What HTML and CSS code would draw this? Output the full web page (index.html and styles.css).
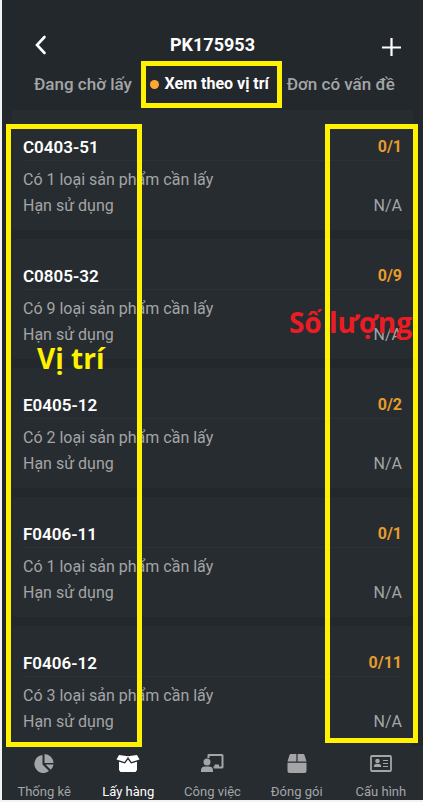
FILE: index.html
```html
<!DOCTYPE html>
<html lang="vi">
<head>
<meta charset="utf-8">
<meta name="viewport" content="width=device-width, initial-scale=1">
<title>PK175953</title>
<link rel="stylesheet" href="styles.css">
</head>
<body>
<div class="app">
  <header class="topbar">
    <button class="icon-button" aria-label="Quay lại"><svg width="24" height="24" viewBox="0 0 24 24"><path d="M16.500 4 9 12l7.500 8" fill="none" stroke="currentColor" stroke-width="2.600" stroke-linecap="round"/></svg></button>
    <h1 class="title">PK175953</h1>
    <button class="icon-button" aria-label="Thêm"><svg width="24" height="24" viewBox="0 0 24 24"><path d="M12.500 5v18M3 14.500h19" fill="none" stroke="currentColor" stroke-width="2.200"/></svg></button>
  </header>
  <nav class="tabs">
    <a class="tab" href="#waiting">Đang chờ lấy</a>
    <a class="tab tab-active" href="#location"><span class="dot"></span>Xem theo vị trí<span class="mark mark-tab"></span></a>
    <a class="tab" href="#issues">Đơn có vấn đề</a>
  </nav>
  <main class="list">
    <article class="card">
      <div class="row head"><h2 class="code">C0403-51</h2><span class="count">0/1</span></div>
      <p class="row">Có 1 loại sản phẩm cần lấy</p>
      <div class="row"><span>Hạn sử dụng</span><span>N/A</span></div>
    </article>
    <article class="card">
      <div class="row head"><h2 class="code">C0805-32</h2><span class="count">0/9</span></div>
      <p class="row">Có 9 loại sản phẩm cần lấy</p>
      <div class="row"><span>Hạn sử dụng</span><span>N/A</span></div>
    </article>
    <article class="card">
      <div class="row head"><h2 class="code">E0405-12</h2><span class="count">0/2</span></div>
      <p class="row">Có 2 loại sản phẩm cần lấy</p>
      <div class="row"><span>Hạn sử dụng</span><span>N/A</span></div>
    </article>
    <article class="card">
      <div class="row head"><h2 class="code">F0406-11</h2><span class="count">0/1</span></div>
      <p class="row">Có 1 loại sản phẩm cần lấy</p>
      <div class="row"><span>Hạn sử dụng</span><span>N/A</span></div>
    </article>
    <article class="card">
      <div class="row head"><h2 class="code">F0406-12</h2><span class="count">0/11</span></div>
      <p class="row">Có 3 loại sản phẩm cần lấy</p>
      <div class="row"><span>Hạn sử dụng</span><span>N/A</span></div>
    </article>
    <div class="mark mark-location"></div>
    <div class="mark mark-quantity"></div>
    <strong class="note note-location">Vị trí</strong>
    <strong class="note note-quantity">Số lượng</strong>
  </main>
  <nav class="bottom">
    <a class="item" href="#stats"><svg width="24" height="24" viewBox="0 0 24 24" fill="currentColor"><path d="M10.500 4A9 9 0 1 0 17 20L10.500 13.500Z"/><path d="M12.500 3A9 9 0 0 1 21.500 12H12.500Z"/><path d="M13.500 13.500H21.500A8.500 8.500 0 0 1 18.800 18.800Z"/></svg>Thống kê</a>
    <a class="item item-active" href="#pick"><svg width="24" height="24" viewBox="0 0 24 24" fill="currentColor"><path d="M3 4 12 5.200 21 4 23.500 8.500 15.500 11 12 6 8.500 11 .5 8.500Z"/><path d="M3 10.700 9 12.500 12 8.500 15 12.500 21 10.700V19L19.500 21H4.500L3 19Z"/></svg>Lấy hàng</a>
    <a class="item" href="#tasks"><svg width="24" height="24" viewBox="0 0 24 24" fill="currentColor"><path d="M7.500 7V4Q7.500 3 8.500 3H22Q23.500 3 23.500 4.500V16Q23.500 17.500 22 17.500H14L13 15.500H14.500V13.500H19V15.500H21.500V5H9.500V7Z"/><circle cx="7" cy="11" r="3.500"/><path d="M1 21V19.500Q1 15.500 5 15.500H9Q13 15.500 13 19.500V21Z"/></svg>Công việc</a>
    <a class="item" href="#pack"><svg width="24" height="24" viewBox="0 0 24 24" fill="currentColor"><path d="M5.500 3H11.400V10.500H2.500L4.500 4Q4.800 3 5.500 3ZM12.600 3H18.500Q19.200 3 19.500 4L21.500 10.500H12.600ZM2.500 11.700H21.500V20Q21.500 22 19.500 22H4.500Q2.500 22 2.500 20Z"/></svg>Đóng gói</a>
    <a class="item" href="#settings"><svg width="24" height="24" viewBox="0 0 24 24"><rect x="2" y="5" width="20" height="15" rx="1" fill="none" stroke="currentColor" stroke-width="1.800"/><g fill="currentColor"><circle cx="8.500" cy="10" r="2.300"/><path d="M4.800 16Q4.800 13 7 13H10Q12.200 13 12.200 16Z"/></g><path d="M14 9.500h5M14 12.500h5M14 15.500h5" stroke="currentColor" stroke-width="1.200"/></svg>Cấu hình</a>
  </nav>
</div>
</body>
</html>
```
FILE: styles.css
```css
* { box-sizing: border-box; }
body { margin: 0; background: #f3f3f3; font-family: Roboto, sans-serif; }
a { color: inherit; text-decoration: none; }
h1, h2, p { margin: 0; }
.app {
  display: flex;
  flex-direction: column;
  margin: 0 0 2px 2px;
  background: #23282c;
  color: #a3a5a7;
}
.topbar {
  display: flex;
  align-items: center;
  justify-content: space-between;
  padding: 32px 20px 0 26px;
  color: #fff;
}
.icon-button {
  display: flex;
  padding: 0;
  border: 0;
  background: none;
  color: inherit;
}
.title { margin-right: 6px; font-size: 18px; line-height: 26px; font-weight: 700; }
.tabs {
  display: flex;
  justify-content: space-between;
  padding: 14px 28px 14px 32px;
  font-size: 17px;
  line-height: 24px;
  font-weight: 500;
  white-space: nowrap;
}
.tab-active { position: relative; display: flex; align-items: center; gap: 6px; color: #fff; font-size: 16px; font-weight: 700; }
.dot { width: 9px; height: 9px; border-radius: 50%; background: #ffa733; }
.list {
  position: relative;
  display: flex;
  flex-direction: column;
  gap: 9px;
  padding: 0 10px;
  font-size: 16px;
  line-height: 26px;
}
.card { padding: 24px 11px 0; height: 120px; background: #272c30; border-radius: 3px; }
.row { display: flex; justify-content: space-between; }
.head { margin-bottom: 6px; border-bottom: 1px solid #2d3236; }
.code { font-size: 17px; font-weight: 600; line-height: 26px; color: #fff; }
.count { font-weight: 700; color: #e59c2c; }
.mark { position: absolute; border: 5px solid #fff200; pointer-events: none; }
.mark-tab { inset: -11px -13px -12px -9px; }
.mark-location { top: 14px; bottom: -1px; left: 4px; width: 136px; }
.mark-quantity { top: 14px; bottom: 3px; right: 5px; width: 93px; }
.note { position: absolute; font-family: "Open Sans", sans-serif; font-size: 28px; line-height: 36px; }
.note-location { top: 230px; left: 35px; color: #fff200; }
.note-quantity { top: 194px; right: 11px; color: #ed1c24; }
.bottom { display: grid; grid-template-columns: repeat(5, 1fr); background: #272c30; }
.item {
  display: flex;
  flex-direction: column;
  align-items: center;
  gap: 8px;
  padding-top: 5px;
  font-size: 13px;
  line-height: 17px;
}
.item-active { color: #fff; }
```
